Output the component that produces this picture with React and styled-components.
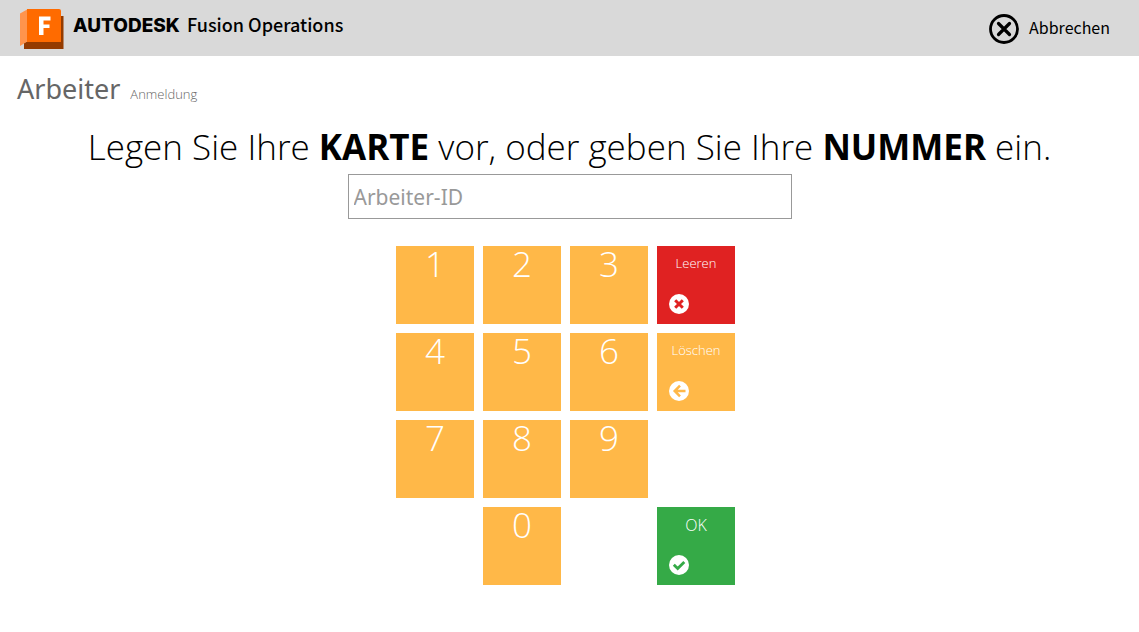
import React, { useState } from "react";
import styled, { createGlobalStyle } from "styled-components";

const GlobalStyle = createGlobalStyle`
  *, *::before, *::after { box-sizing: border-box; }
  body {
    margin: 0;
    background: #fff;
    color: #000;
    font-family: "Open Sans", "Noto Sans", sans-serif;
  }
`;

const TopBar = styled.header`
  display: flex;
  align-items: center;
  justify-content: space-between;
  height: 56px;
  padding: 2px 29px 0 20px;
  background: #d9d9d9;
`;

const Brand = styled.a`
  display: flex;
  align-items: center;
  color: #000;
  text-decoration: none;
`;

const BrandName = styled.span`
  display: flex;
  align-items: baseline;
  gap: 7px;
  margin-left: 9px;
  padding-bottom: 8px;
  font: 500 18px/24px "Noto Sans CJK SC", "Noto Sans", sans-serif;
  white-space: nowrap;
`;

const Company = styled.strong`
  font: 800 19px/24px Inter, sans-serif;
`;

const CancelButton = styled.button`
  display: flex;
  align-items: center;
  gap: 10px;
  padding: 0;
  border: 0;
  background: none;
  color: #000;
  font: 400 16px/24px "Noto Sans CJK SC", "Noto Sans", sans-serif;
  cursor: pointer;

  span { padding-bottom: 4px; }
`;

const PageTitle = styled.h1`
  display: flex;
  align-items: baseline;
  gap: 10px;
  margin: 0;
  padding: 13px 17px 0;
  color: #666;
  font: 400 27px/40px "Noto Sans", sans-serif;
`;

const Subtitle = styled.small`
  color: #666;
  font: 300 13px/20px "Open Sans", sans-serif;
`;

const Login = styled.main`
  display: flex;
  flex-direction: column;
  align-items: center;
  padding: 14px 20px 40px;
`;

const Prompt = styled.label`
  font-size: 35px;
  font-weight: 300;
  line-height: 48px;
  text-align: center;

  strong { font-weight: 700; }
`;

const WorkerInput = styled.input`
  width: 444px;
  max-width: 100%;
  height: 45px;
  margin-top: 3px;
  padding: 0 5px;
  border: 1px solid #999;
  border-radius: 0;
  background: #fff;
  color: #333;
  font: 400 21px/32px "Noto Sans", sans-serif;

  &::placeholder { color: #999; opacity: 1; }
`;

const Keypad = styled.div`
  display: grid;
  grid-template-columns: repeat(4, 78px);
  grid-auto-rows: 78px;
  gap: 9px;
  margin-top: 27px;
  padding-right: 9px;
`;

const tones = { digit: "#ffb848", clear: "#e02222", confirm: "#35aa47" };

const Key = styled.button`
  grid-column: ${(p) => p.$column};
  grid-row: ${(p) => p.$row};
  display: flex;
  flex-direction: column;
  align-items: center;
  padding: 0;
  border: 0;
  background: ${(p) => tones[p.$tone]};
  color: #fff;
  font-family: "Open Sans", sans-serif;
  font-weight: 300;
  cursor: pointer;
`;

const DigitKey = styled(Key)`
  padding-left: 1px;
  font-size: 35px;
  line-height: 36px;
`;

const ActionKey = styled(Key)`
  justify-content: space-between;
  padding: 7px 0 10px 1px;
  font-size: ${(p) => (p.$large ? 16 : 13)}px;
  line-height: ${(p) => (p.$large ? 22 : 20)}px;

  svg { align-self: flex-start; margin-left: 11px; color: ${(p) => tones[p.$tone]}; }
`;

const digits = [
  ["1", 1, 1], ["2", 2, 1], ["3", 3, 1],
  ["4", 1, 2], ["5", 2, 2], ["6", 3, 2],
  ["7", 1, 3], ["8", 2, 3], ["9", 3, 3],
  ["0", 2, 4],
];

function FusionLogo() {
  return (
    <svg width="44" height="40" viewBox="0 0 44 40" aria-hidden="true">
      <path d="M4 34L8 32H41V7H43.500V40H4Z" fill="#943b00" />
      <path d="M0 4.500L8 0V32L0 37Z" fill="#ff944d" />
      <path d="M7 0H39Q41 0 41 2V33H7Z" fill="#ff6b00" />
      <path d="M19 7.500H30.500V11.500H23.500V15.500H29.500V19H23.500V26H19Z" fill="#fff" />
    </svg>
  );
}

function CancelIcon() {
  return (
    <svg width="30" height="30" viewBox="0 0 30 30" fill="none" stroke="#000" aria-hidden="true">
      <circle cx="15" cy="15" r="13.500" strokeWidth="2.800" />
      <path d="M9.500 9.500L20.500 20.500M20.500 9.500L9.500 20.500" strokeWidth="3.200" strokeLinecap="round" />
    </svg>
  );
}

function DiscIcon({ d, weight }) {
  return (
    <svg width="20" height="20" viewBox="0 0 20 20" aria-hidden="true">
      <circle cx="10" cy="10" r="10" fill="#fff" />
      <path d={d} fill="none" stroke="currentColor" strokeWidth={weight} />
    </svg>
  );
}

export default function App() {
  const [workerId, setWorkerId] = useState("");

  return (
    <>
      <GlobalStyle />
      <TopBar>
        <Brand href="#">
          <FusionLogo />
          <BrandName>
            <Company>AUTODESK</Company>
            <span>Fusion Operations</span>
          </BrandName>
        </Brand>
        <CancelButton type="button">
          <CancelIcon />
          <span>Abbrechen</span>
        </CancelButton>
      </TopBar>
      <PageTitle>
        Arbeiter <Subtitle>Anmeldung</Subtitle>
      </PageTitle>
      <Login>
        <Prompt htmlFor="worker-id">
          Legen Sie Ihre <strong>KARTE</strong> vor, oder geben Sie Ihre <strong>NUMMER</strong> ein.
        </Prompt>
        <WorkerInput
          id="worker-id"
          type="text"
          placeholder="Arbeiter-ID"
          value={workerId}
          onChange={(e) => setWorkerId(e.target.value)}
        />
        <Keypad>
          {digits.map(([digit, column, row]) => (
            <DigitKey
              key={digit}
              type="button"
              $tone="digit"
              $column={column}
              $row={row}
              onClick={() => setWorkerId((id) => id + digit)}
            >
              {digit}
            </DigitKey>
          ))}
          <ActionKey type="button" $tone="clear" $column={4} $row={1} onClick={() => setWorkerId("")}>
            Leeren
            <DiscIcon d="M6.200 6.200L13.800 13.800M13.800 6.200L6.200 13.800" weight={3} />
          </ActionKey>
          <ActionKey
            type="button"
            $tone="digit"
            $column={4}
            $row={2}
            onClick={() => setWorkerId((id) => id.slice(0, -1))}
          >
            Löschen
            <DiscIcon d="M11 4.700L5.700 10L11 15.300M6 10H16.500" weight={2.5} />
          </ActionKey>
          <ActionKey type="button" $tone="confirm" $large $column={4} $row={4}>
            OK
            <DiscIcon d="M4.800 9.800L8.700 13.600L15.300 7" weight={2.8} />
          </ActionKey>
        </Keypad>
      </Login>
    </>
  );
}
